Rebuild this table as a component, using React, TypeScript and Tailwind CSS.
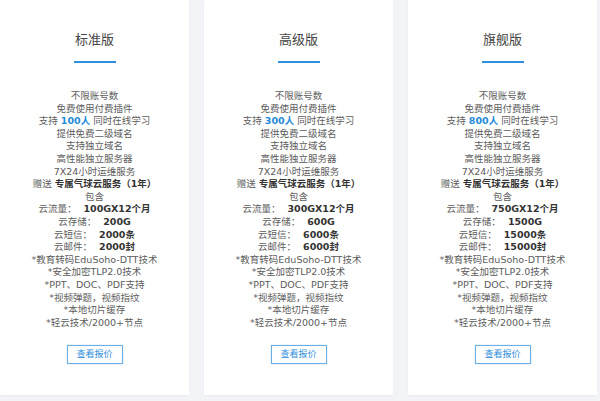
import React from 'react';

interface Plan {
  name: string;
  users: string;
  flow: string;
  storage: string;
  sms: string;
  mail: string;
}

const plans: Plan[] = [
  { name: '标准版', users: '100人', flow: '100GX12个月', storage: '200G', sms: '2000条', mail: '2000封' },
  { name: '高级版', users: '300人', flow: '300GX12个月', storage: '600G', sms: '6000条', mail: '6000封' },
  { name: '旗舰版', users: '800人', flow: '750GX12个月', storage: '1500G', sms: '15000条', mail: '15000封' },
];

const font = { fontFamily: '"DejaVu Sans", "Noto Sans CJK SC", sans-serif' };

const PlanCard: React.FC<{ plan: Plan }> = ({ plan }) => {
  return (
    <div className="w-[189px] h-[395px] bg-white flex flex-col items-center pt-[30px] shadow-[0_1px_2px_rgba(0,0,0,0.04)]">
      <h3 className="text-[13px] leading-[20px] text-[#444]" style={font}>{plan.name}</h3>
      <div className="mt-[11px] w-[42px] h-[2px] bg-[#2f8fdc]" />

      {/* feature list */}
      <ul className="mt-[27px] text-[9.5px] leading-[12.6px] text-[#5c5c5c] text-center" style={font}>
        <li>不限账号数</li>
        <li>免费使用付费插件</li>
        <li>
          支持 <b className="text-[#1f8ad8]">{plan.users}</b> 同时在线学习
        </li>
        <li>提供免费二级域名</li>
        <li>支持独立域名</li>
        <li>高性能独立服务器</li>
        <li>7X24小时运维服务</li>
        <li>
          赠送 <b className="text-[#333]">专属气球云服务（1年）</b>
        </li>
        <li>包含</li>
        <li>云流量： <b className="text-[#333] ml-1">{plan.flow}</b></li>
        <li>云存储： <b className="text-[#333] ml-1">{plan.storage}</b></li>
        <li>云短信： <b className="text-[#333] ml-1">{plan.sms}</b></li>
        <li>云邮件： <b className="text-[#333] ml-1">{plan.mail}</b></li>
        <li>*教育转码EduSoho-DTT技术</li>
        <li>*安全加密TLP2.0技术</li>
        <li>*PPT、DOC、PDF支持</li>
        <li>*视频弹题，视频指纹</li>
        <li>*本地切片缓存</li>
        <li>*轻云技术/2000+节点</li>
      </ul>

      <button
        className="mt-[16px] w-[56px] h-[19px] border border-[#6aaee6] text-[#2f8fdc] text-[9px] leading-none flex items-center justify-center shadow-[0_0_2px_rgba(47,143,220,0.25)]"
        style={font}
      >
        查看报价
      </button>
    </div>
  );
};

export default function App() {
  return (
    <div className="w-[600px] h-[401px] bg-[#f2f4f7] overflow-hidden">
      <div className="flex gap-[15px]">
        {plans.map((p) => (
          <PlanCard key={p.name} plan={p} />
        ))}
      </div>
    </div>
  );
}
